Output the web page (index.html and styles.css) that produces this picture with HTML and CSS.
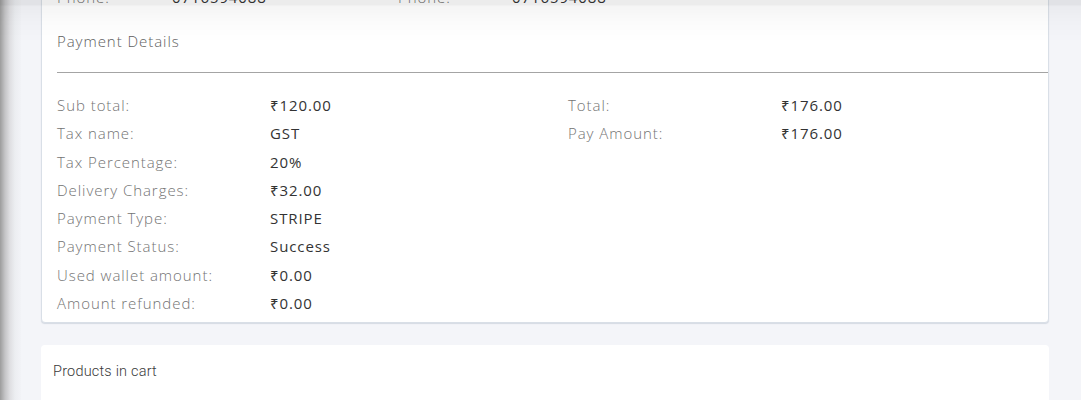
FILE: index.html
```html
<!DOCTYPE html>
<html lang="en">
<head>
<meta charset="utf-8">
<title>Order details</title>
<link rel="stylesheet" href="styles.css">
</head>
<body>
<div class="topshade"></div>
<div class="page">
  <aside class="edge"></aside>
  <main class="main">
    <section class="card details">
      <div class="grid phone-row">
        <span class="lbl">Phone:</span><span class="val">0716594088</span>
        <span class="lbl">Phone:</span><span class="val">0716594088</span>
      </div>
      <h3 class="title">Payment Details</h3>
      <hr class="rule">
      <div class="cols">
        <div class="grid">
          <span class="lbl">Sub total:</span><span class="val">₹120.00</span>
          <span class="lbl">Tax name:</span><span class="val">GST</span>
          <span class="lbl">Tax Percentage:</span><span class="val">20%</span>
          <span class="lbl">Delivery Charges:</span><span class="val">₹32.00</span>
          <span class="lbl">Payment Type:</span><span class="val">STRIPE</span>
          <span class="lbl">Payment Status:</span><span class="val">Success</span>
          <span class="lbl">Used wallet amount:</span><span class="val">₹0.00</span>
          <span class="lbl">Amount refunded:</span><span class="val">₹0.00</span>
        </div>
        <div class="grid">
          <span class="lbl">Total:</span><span class="val">₹176.00</span>
          <span class="lbl">Pay Amount:</span><span class="val">₹176.00</span>
        </div>
      </div>
    </section>
    <section class="card products">
      <h3 class="ptitle">Products in cart</h3>
    </section>
  </main>
</div>
</body>
</html>
```
FILE: styles.css
```css
html, body {
  margin: 0;
  padding: 0;
}
body {
  background: #f4f5f9;
  font-family: "Open Sans", "Noto Sans", sans-serif;
  overflow: hidden;
  height: 400px;
}
.page {
  display: flex;
  align-items: flex-start;
}
.edge {
  width: 21px;
  flex: 0 0 21px;
  height: 400px;
  background: linear-gradient(to right, #9c9c9c 0px, #c4c4c6 5px, #dfdfe2 10px, #eceef1 15px, #f2f3f7 21px);
}
.main {
  flex: 1;
  padding: 0 32px 0 20px;
  margin-top: -30px;
}
.card {
  background: #fff;
  border-radius: 4px;
}
.details {
  border: 1px solid #d9dfe7;
  box-shadow: 0 1px 1px rgba(120, 140, 165, 0.25);
  padding: 16px 0 5px 15px;
  overflow: hidden;
}
.grid {
  display: grid;
  grid-template-columns: 213px 1fr;
  font-size: 15px;
}
.phone-row {
  grid-template-columns: 115px 226px 114px 1fr;
  line-height: 20px;
}
.lbl {
  color: #737373;
  font-weight: 300;
  letter-spacing: 0.95px;
}
.val {
  color: #333;
  font-weight: 400;
  letter-spacing: 0.9px;
}
.title {
  margin: 24px 0 0;
  font-size: 15px;
  font-weight: 300;
  color: #606060;
  line-height: 20px;
  letter-spacing: 0.95px;
}
.rule {
  margin: 21px 0 0;
  border: 0;
  border-top: 1px solid #a4a4a4;
  height: 0;
}
.cols {
  display: grid;
  grid-template-columns: 511px 1fr;
  margin-top: 18px;
}
.cols .grid {
  line-height: 28.3px;
  align-content: start;
}
.products {
  margin-top: 22px;
  padding: 17px 12px 30px;
}
.ptitle {
  margin: 0;
  font-family: Roboto, sans-serif;
  font-weight: 300;
  font-size: 14.5px;
  line-height: 20px;
  color: #3a3a3a;
  letter-spacing: 0.2px;
}
.topshade {
  position: fixed;
  top: 0;
  left: 0;
  right: 0;
  height: 42px;
  pointer-events: none;
  z-index: 5;
  background: linear-gradient(to bottom, rgba(0, 0, 0, 0.075) 0px, rgba(0, 0, 0, 0.075) 5px, rgba(0, 0, 0, 0.04) 6px, rgba(0, 0, 0, 0.015) 22px, rgba(0, 0, 0, 0) 42px);
}
```
